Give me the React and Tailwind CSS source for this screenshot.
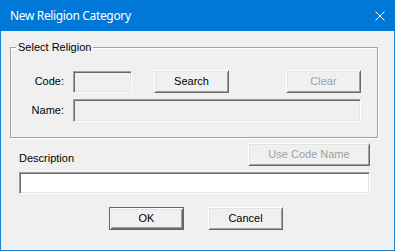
import React from "react";

const raised =
  "border border-t-white border-l-white border-b-[#696969] border-r-[#696969] shadow-[inset_1px_1px_0_#e3e3e3,inset_-1px_-1px_0_#a0a0a0] bg-[#f0f0f0]";
const sunken =
  "border border-t-[#a0a0a0] border-l-[#a0a0a0] border-b-white border-r-white shadow-[inset_1px_1px_0_#696969,inset_-1px_-1px_0_#e3e3e3]";

function Btn({ children, className = "", disabled, def }) {
  const base = def
    ? "border border-[#646464] shadow-[inset_1px_1px_0_#fff,inset_-1px_-1px_0_#696969,inset_2px_2px_0_#e3e3e3,inset_-2px_-2px_0_#a0a0a0] bg-[#f0f0f0]"
    : raised;
  return (
    <div
      className={`${base} h-[23px] w-[75px] flex items-center justify-center shrink-0 ${
        disabled ? "text-[#a0a0a0]" : "text-black"
      } ${className}`}
    >
      {children}
    </div>
  );
}

export default function App() {
  return (
    <div
      className="w-[395px] h-[251px] bg-[#1883d7] flex flex-col"
      style={{ fontFamily: '"Liberation Sans", Arial, sans-serif' }}
    >
      <div className="h-[31px] shrink-0 bg-[#0078d7] flex items-center pl-[10px] pr-[10px] text-white">
        <span
          className="text-[12px] leading-none tracking-[-0.35px]"
          style={{ fontFamily: '"Noto Sans", "Open Sans", sans-serif' }}
        >
          New Religion Category
        </span>
        <svg className="ml-auto" width="10" height="10" viewBox="0 0 10 10">
          <path d="M0.5 0.5 L9.5 9.5 M9.5 0.5 L0.5 9.5" stroke="#fff" strokeWidth="1" />
        </svg>
      </div>
      <div className="flex-1 mx-px mb-px bg-[#f0f0f0] flex flex-col text-[11px] leading-[13px] text-black">
        <div className="relative mt-[16px] ml-[9px] w-[368px] h-[91px] shrink-0 border border-[#a0a0a0] shadow-[inset_1px_1px_0_#fff,1px_1px_0_#fff]">
          <div className="absolute left-[5px] top-[-7px] px-[2px] bg-[#f0f0f0]">Select Religion</div>
          <div className="flex items-center mt-[22px]">
            <div className="w-[53px] text-right">Code:</div>
            <div className={`${sunken} ml-[9px] w-[59px] h-[22px] bg-[#f0f0f0]`} />
            <Btn className="ml-[22px]">Search</Btn>
            <Btn className="ml-[57px]" disabled>
              Clear
            </Btn>
          </div>
          <div className="flex items-center mt-[6px]">
            <div className="w-[53px] text-right">Name:</div>
            <div className={`${sunken} ml-[9px] w-[288px] h-[23px] bg-[#f0f0f0]`} />
          </div>
        </div>
        <div className="flex items-start mt-[5px] ml-[18px] w-[351px]">
          <div className="mt-[9px]">Description</div>
          <Btn className="ml-auto w-[122px]" disabled>
            Use Code Name
          </Btn>
        </div>
        <div className={`${sunken} mt-[6px] ml-[18px] w-[351px] h-[22px] bg-white`} />
        <div className="flex mt-[13px] ml-[108px] gap-[24px]">
          <Btn def>OK</Btn>
          <Btn>Cancel</Btn>
        </div>
      </div>
    </div>
  );
}
